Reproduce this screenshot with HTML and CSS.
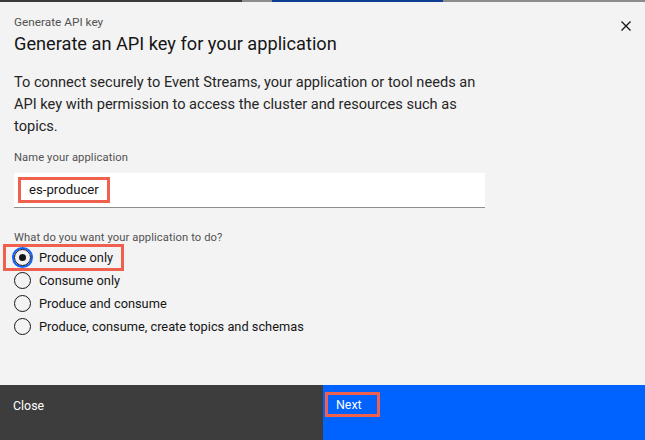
FILE: index.html
```html
<!DOCTYPE html>
<html lang="en">
<head>
<meta charset="utf-8">
<title>Generate API key</title>
<link rel="stylesheet" href="styles.css">
</head>
<body>
<div class="page">
  <div class="strip">
    <span class="seg seg-dark"></span>
    <span class="seg seg-gray1"></span>
    <span class="seg seg-blue"></span>
    <span class="seg seg-gray2"></span>
  </div>
  <div class="modal">
    <div class="header">
      <div class="heading">
        <div class="eyebrow">Generate API key</div>
        <h1 class="title">Generate an API key for your application</h1>
      </div>
      <button class="close-x" aria-label="Close">
        <svg width="16" height="16" viewBox="0 0 16 16"><path d="M3.5 3.5 L12.5 12.5 M12.5 3.5 L3.5 12.5" stroke="#161616" stroke-width="1.3" fill="none"/></svg>
      </button>
    </div>
    <div class="body">
      <p class="intro">To connect securely to Event Streams, your application or tool needs an API key with permission to access the cluster and resources such as topics.</p>
      <label class="field-label">Name your application</label>
      <div class="input">
        <span class="input-value">es-producer</span>
      </div>
      <div class="field-label group-label">What do you want your application to do?</div>
      <div class="radios">
        <div class="radio-row selected">
          <span class="radio checked"></span><span class="radio-text">Produce only</span>
        </div>
        <div class="radio-row">
          <span class="radio"></span><span class="radio-text">Consume only</span>
        </div>
        <div class="radio-row">
          <span class="radio"></span><span class="radio-text">Produce and consume</span>
        </div>
        <div class="radio-row">
          <span class="radio"></span><span class="radio-text">Produce, consume, create topics and schemas</span>
        </div>
      </div>
    </div>
    <div class="footer">
      <div class="btn btn-secondary">Close</div>
      <div class="btn btn-primary"><span class="next">Next</span></div>
    </div>
  </div>
</div>
</body>
</html>
```
FILE: styles.css
```css
* { box-sizing: border-box; }
html, body { margin: 0; padding: 0; }
body {
  width: 645px;
  height: 440px;
  overflow: hidden;
  font-family: Roboto, "Noto Sans", sans-serif;
  color: #161616;
  background: #f3f3f3;
}
.page { display: flex; flex-direction: column; height: 440px; }
.strip { display: flex; height: 2px; flex: none; }
.seg { display: block; height: 2px; }
.seg-dark { width: 242px; background: #393939; }
.seg-gray1 { width: 30px; background: #8d8d8d; }
.seg-blue { width: 171px; background: #0e3c90; }
.seg-gray2 { flex: 1; background: #8c8c8c; }

.modal { flex: 1; display: flex; flex-direction: column; background: #f3f3f3; }

.header { display: flex; justify-content: space-between; align-items: flex-start; padding: 12px 8px 0 14px; }
.eyebrow { font-size: 11.8px; line-height: 16px; color: #525252; }
.title { margin: 0; font-size: 18.2px; line-height: 27px; font-weight: 400; color: #161616; }
.close-x { border: 0; background: transparent; padding: 0; width: 22px; height: 22px; display: flex; align-items: center; justify-content: center; margin-top: 1px; }

.body { flex: 1; padding: 0 14px; }
.intro { margin: 14px 0 0; width: 470px; font-size: 14.6px; line-height: 22px; color: #262626; }
.field-label { display: block; font-size: 11.2px; line-height: 16px; color: #525252; letter-spacing: 0.1px; }
.body .field-label { margin-top: 13px; }
.input { margin-top: 7px; width: 471px; height: 35px; background: #ffffff; border-bottom: 1px solid #8d8d8d; display: flex; align-items: center; padding-left: 4px; }
.input-value { font-size: 13.2px; line-height: 20px; border: 3px solid #f0604e; padding: 0 8px 0 8px; height: 26px; display: flex; align-items: center; color: #161616; }
.body .group-label { margin-top: 22px; }
.radios { margin-top: 3px; display: flex; flex-direction: column; gap: 7px; }
.radio-row { display: flex; align-items: center; gap: 8px; height: 16px; font-size: 12.8px; color: #161616; white-space: nowrap; }
.radio-row.selected { margin: -5px 0 -6px -11px; padding: 0 8px 0 8px; height: 27px; align-self: flex-start; border: 3px solid #f0604e; }
.radio { width: 17px; height: 17px; border-radius: 50%; border: 1px solid #161616; flex: none; background: transparent; position: relative; }
.radio.checked { box-shadow: 0 0 0 2px #0f62fe; border: 1px solid #161616; }
.radio.checked::after { content: ""; position: absolute; left: 4px; top: 4px; width: 7px; height: 7px; border-radius: 50%; background: #161616; }

.footer { display: grid; grid-template-columns: 323px 1fr; height: 55px; flex: none; }
.btn { font-size: 12.4px; color: #ffffff; padding: 13px 13px; }
.btn-secondary { background: #3d3d3d; }
.btn-primary { background: #0062ff; padding: 7px 2px; }
.next { display: inline-block; border: 3px solid #f0604e; padding: 1px 8px 0 8px; height: 25px; width: 55px; line-height: 17px; }
```
